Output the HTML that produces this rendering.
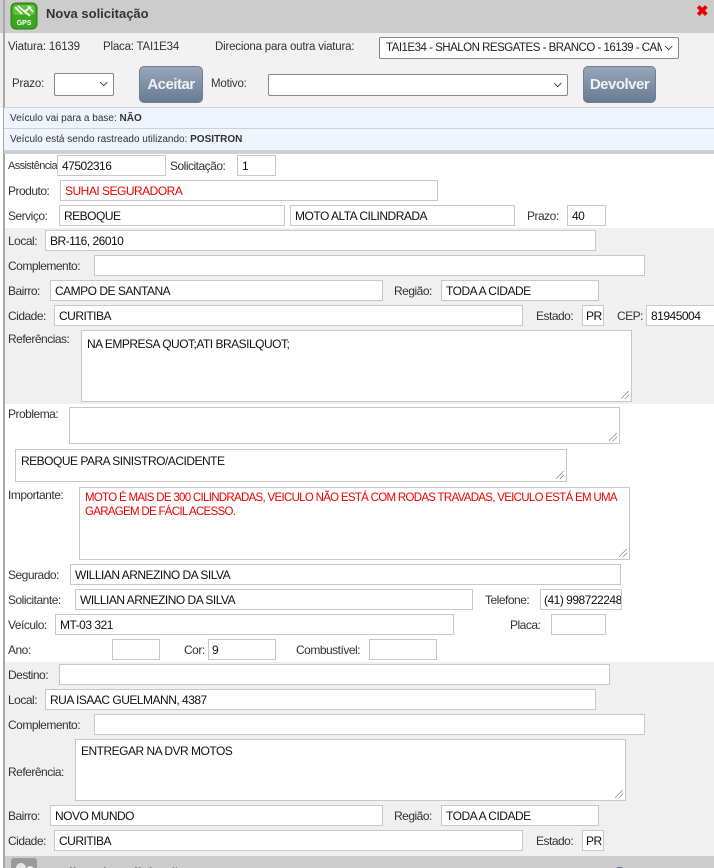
<!DOCTYPE html>
<html><head><meta charset="utf-8">
<style>
*{box-sizing:border-box;margin:0;padding:0}
body{width:714px;height:868px;overflow:hidden;background:#fff;font-family:"Liberation Sans",sans-serif;color:#333;position:relative}
.a{position:absolute}
.l{position:absolute;font-size:12px;letter-spacing:-0.5px;line-height:22px;color:#333;white-space:nowrap}
.i{position:absolute;height:21px;background:#fff;border:1px solid #c8c8c8;font-size:12px;letter-spacing:-0.5px;line-height:20px;padding-left:4px;color:#111;white-space:nowrap;overflow:hidden}
.t{position:absolute;background:#fff;border:1px solid #c8c8c8;font-size:12px;letter-spacing:-0.5px;line-height:15px;padding:6px 5px;color:#111}
.t:after{content:"";position:absolute;right:2px;bottom:2px;width:8px;height:8px;background:linear-gradient(135deg,transparent 45%,#888 45%,#888 52%,transparent 52%,transparent 70%,#888 70%,#888 77%,transparent 77%)}
.r{color:#e00}
.sel{position:absolute;background:#fff;border:1px solid #888;border-radius:2px;font-size:11.5px;letter-spacing:-0.5px;line-height:19px;padding-left:6px;color:#222;white-space:nowrap;overflow:hidden}
.sel b{position:absolute;right:6px;top:0;font-weight:bold;font-size:10px;background:#fff;padding-left:3px}
.btn{position:absolute;background:linear-gradient(#97a7ba,#687b92);border:1px solid #6e7f94;border-radius:5px;color:#eef2f6;font-weight:bold;font-size:15px;letter-spacing:-0.5px;text-align:center;line-height:36px}
.top{font-size:11.5px;letter-spacing:-0.2px;line-height:21px;position:absolute;white-space:nowrap;color:#333}
.info{position:absolute;left:4px;width:710px;height:22px;background:#eef5fc;border-bottom:1px solid #c9d3dc;font-size:10px;line-height:21px;padding-left:6px;color:#333}
</style></head><body>
<div class="a" style="left:0;top:0;width:714px;height:33px;background:#cccccc"></div>
<div class="a" style="left:0;top:33px;width:714px;height:75px;background:#f2f2f2"></div>
<div class="a" style="left:3px;top:0;width:2px;height:868px;background:#a8a8a8"></div>
<svg class="a" style="left:10px;top:2px" width="28" height="28" viewBox="0 0 28 28"><rect x="1" y="1" width="26" height="26" rx="5" fill="#3aa81c" stroke="#2b7d12"/><rect x="3" y="3" width="22" height="10" rx="3" fill="#7ed35a" opacity=".6"/><path d="M5 5 L12 12 M8 4 L20 14 M21 5 L14 10 M18 4 L23 10" stroke="#fff" stroke-width="1.6" fill="none"/><text x="14" y="23" font-size="7" font-weight="bold" fill="#fff" text-anchor="middle" font-family="Liberation Sans">GPS</text></svg>
<div class="a" style="left:46px;top:6px;font-size:13px;font-weight:bold;line-height:16px;color:#333">Nova solicitação</div>
<div class="a" style="left:696px;top:4px;font-size:15px;font-weight:bold;color:#e00;line-height:16px">✖</div>

<div class="top" style="left:8px;top:37px">Viatura: 16139</div>
<div class="top" style="left:103px;top:37px">Placa: TAI1E34</div>
<div class="top" style="left:215px;top:37px">Direciona para outra viatura:</div>
<div class="sel" style="left:379px;top:37px;width:300px;height:22px;line-height:20px">TAI1E34 - SHALON RESGATES - BRANCO - 16139 - CAM<b>&#9013;</b></div>
<div class="top" style="left:12px;top:74px">Prazo:</div>
<div class="sel" style="left:54px;top:73px;width:60px;height:23px"><b>&#9013;</b></div>
<div class="btn" style="left:139px;top:66px;width:64px;height:37px">Aceitar</div>
<div class="top" style="left:211px;top:74px">Motivo:</div>
<div class="sel" style="left:268px;top:74px;width:300px;height:22px"><b>&#9013;</b></div>
<div class="btn" style="left:583px;top:66px;width:73px;height:37px">Devolver</div>

<div class="info" style="top:107px;border-top:1px solid #c9d3dc">Veículo vai para a base: <b>NÃO</b></div>
<div class="info" style="top:129px">Veículo está sendo rastreado utilizando: <b>POSITRON</b></div>
<div class="a" style="left:4px;top:151px;width:710px;height:3px;background:#cfcfcf"></div>

<div class="a" style="left:5px;top:228px;width:709px;height:176px;background:#f0f0f0"></div>
<div class="a" style="left:5px;top:662px;width:709px;height:194px;background:#f0f0f0"></div>

<div class="l" style="left:8px;top:155px;font-size:11px;letter-spacing:-0.6px">Assistência:</div><div class="i" style="left:57px;top:155px;width:109px">47502316</div>
<div class="l" style="left:170px;top:155px">Solicitação:</div><div class="i" style="left:237px;top:155px;width:39px">1</div>
<div class="l" style="left:8px;top:180px">Produto:</div><div class="i r" style="left:60px;top:180px;width:378px">SUHAI SEGURADORA</div>
<div class="l" style="left:8px;top:205px">Serviço:</div><div class="i" style="left:59px;top:205px;width:226px">REBOQUE</div>
<div class="i" style="left:290px;top:205px;width:225px">MOTO ALTA CILINDRADA</div>
<div class="l" style="left:527px;top:205px">Prazo:</div><div class="i" style="left:567px;top:205px;width:39px">40</div>

<div class="l" style="left:8px;top:230px">Local:</div><div class="i" style="left:45px;top:230px;width:551px">BR-116, 26010</div>
<div class="l" style="left:8px;top:255px">Complemento:</div><div class="i" style="left:94px;top:255px;width:551px"></div>
<div class="l" style="left:8px;top:280px">Bairro:</div><div class="i" style="left:50px;top:280px;width:333px">CAMPO DE SANTANA</div>
<div class="l" style="left:394px;top:280px">Região:</div><div class="i" style="left:441px;top:280px;width:158px">TODA A CIDADE</div>
<div class="l" style="left:8px;top:305px">Cidade:</div><div class="i" style="left:54px;top:305px;width:469px">CURITIBA</div>
<div class="l" style="left:536px;top:305px">Estado:</div><div class="i" style="left:582px;top:305px;width:22px;padding-left:3px">PR</div>
<div class="l" style="left:617px;top:305px">CEP:</div><div class="i" style="left:646px;top:305px;width:80px">81945004</div>
<div class="l" style="left:8px;top:328px">Referências:</div><div class="t" style="left:81px;top:330px;width:551px;height:72px">NA EMPRESA QUOT;ATI BRASILQUOT;</div>

<div class="l" style="left:8px;top:403px">Problema:</div><div class="t" style="left:69px;top:407px;width:551px;height:37px"></div>
<div class="t" style="left:15px;top:449px;width:552px;height:33px;padding-top:4px">REBOQUE PARA SINISTRO/ACIDENTE</div>
<div class="l" style="left:8px;top:484px">Importante:</div><div class="t r" style="left:79px;top:487px;width:551px;height:73px;padding-top:3px;line-height:14px;color:#e00;white-space:nowrap;overflow:hidden;font-size:11.5px;letter-spacing:-0.7px">MOTO É MAIS DE 300 CILINDRADAS, VEICULO NÃO ESTÁ COM RODAS TRAVADAS, VEICULO ESTÁ EM UMA<br>GARAGEM DE FÁCIL ACESSO.</div>
<div class="l" style="left:8px;top:564px">Segurado:</div><div class="i" style="left:70px;top:564px;width:551px">WILLIAN ARNEZINO DA SILVA</div>
<div class="l" style="left:8px;top:589px">Solicitante:</div><div class="i" style="left:75px;top:589px;width:398px">WILLIAN ARNEZINO DA SILVA</div>
<div class="l" style="left:485px;top:589px">Telefone:</div><div class="i" style="left:540px;top:589px;width:82px;padding-left:3px">(41) 998722248</div>
<div class="l" style="left:8px;top:614px">Veículo:</div><div class="i" style="left:55px;top:614px;width:399px">MT-03 321</div>
<div class="l" style="left:510px;top:614px">Placa:</div><div class="i" style="left:551px;top:614px;width:55px"></div>
<div class="l" style="left:8px;top:639px">Ano:</div><div class="i" style="left:112px;top:639px;width:48px"></div>
<div class="l" style="left:184px;top:639px">Cor:</div><div class="i" style="left:208px;top:639px;width:68px;padding-left:3px">9</div>
<div class="l" style="left:296px;top:639px">Combustível:</div><div class="i" style="left:369px;top:639px;width:68px"></div>

<div class="l" style="left:8px;top:664px">Destino:</div><div class="i" style="left:59px;top:664px;width:551px"></div>
<div class="l" style="left:8px;top:689px">Local:</div><div class="i" style="left:45px;top:689px;width:551px">RUA ISAAC GUELMANN, 4387</div>
<div class="l" style="left:8px;top:714px">Complemento:</div><div class="i" style="left:94px;top:714px;width:551px"></div>
<div class="l" style="left:8px;top:761px">Referência:</div><div class="t" style="left:75px;top:739px;width:551px;height:62px;padding-top:4px">ENTREGAR NA DVR MOTOS</div>
<div class="l" style="left:8px;top:805px">Bairro:</div><div class="i" style="left:50px;top:805px;width:333px">NOVO MUNDO</div>
<div class="l" style="left:394px;top:805px">Região:</div><div class="i" style="left:441px;top:805px;width:158px">TODA A CIDADE</div>
<div class="l" style="left:8px;top:830px">Cidade:</div><div class="i" style="left:54px;top:830px;width:469px">CURITIBA</div>
<div class="l" style="left:536px;top:830px">Estado:</div><div class="i" style="left:582px;top:830px;width:22px;padding-left:3px">PR</div>

<div class="a" style="left:5px;top:856px;width:709px;height:12px;background:#cccccc;overflow:hidden">
<svg class="a" style="left:6px;top:2px" width="26" height="20"><rect x="0" y="0" width="26" height="20" rx="3" fill="#9a9a9a"/><circle cx="10" cy="10" r="5" fill="#e8e8e8"/><circle cx="19" cy="12" r="4" fill="#e8e8e8"/></svg>
<div class="a" style="left:36px;top:9px;font-size:13px;font-weight:bold;color:#333;white-space:nowrap">Detalhes da Solicitação</div>
<div class="a" style="left:611px;top:9px;font-size:12px;color:#00c;white-space:nowrap">Recarregar</div>
</div>
</body></html>
